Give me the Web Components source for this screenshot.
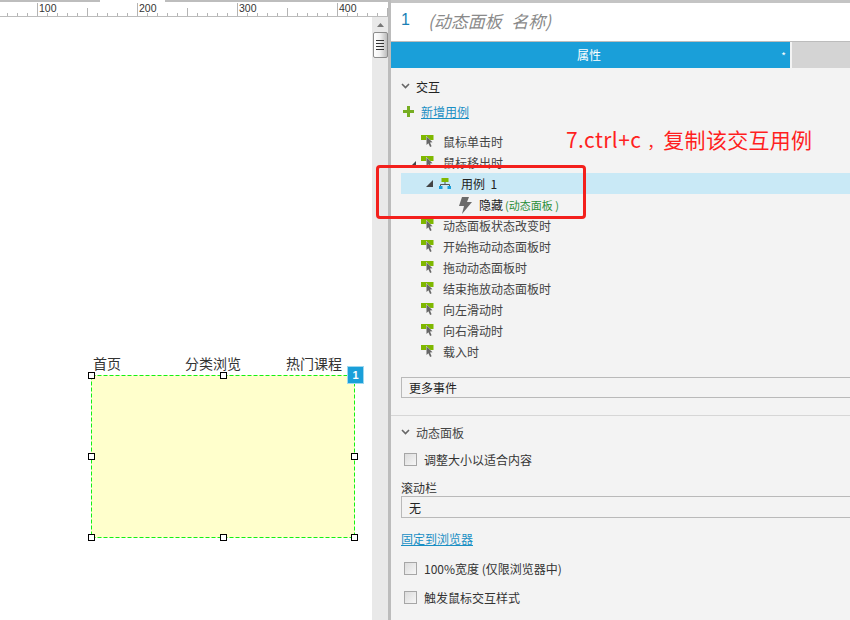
<!DOCTYPE html>
<html lang="zh">
<head>
<meta charset="utf-8">
<title>动态面板</title>
<style>
  html, body { margin: 0; height: 100%; overflow: hidden; background: #fff; }
  body { font: 12px "Noto Sans CJK SC", "Noto Sans", sans-serif; color: #333; }
</style>
</head>
<body>
<app-shell>
  <design-canvas slot="canvas">
    <canvas-label style="left:93px;top:353px">首页</canvas-label>
    <canvas-label style="left:185px;top:353px">分类浏览</canvas-label>
    <canvas-label style="left:286px;top:353px">热门课程</canvas-label>
    <panel-widget style="left:91px;top:375px" badge="1"></panel-widget>
  </design-canvas>

  <inspector-panel slot="panel">
    <section-head>交互</section-head>
    <add-case>新增用例</add-case>
    <div class="events" style="margin-top:10px">
      <event-row>鼠标单击时</event-row>
      <event-row open>鼠标移出时</event-row>
      <case-row>用例&nbsp; 1</case-row>
      <action-row target="(动态面板 )">隐藏</action-row>
      <event-row>动态面板状态改变时</event-row>
      <event-row>开始拖动动态面板时</event-row>
      <event-row>拖动动态面板时</event-row>
      <event-row>结束拖放动态面板时</event-row>
      <event-row>向左滑动时</event-row>
      <event-row>向右滑动时</event-row>
      <event-row>载入时</event-row>
    </div>
    <select-box style="margin-top:15px">更多事件</select-box>
    <hr-line></hr-line>
    <section-head style="margin-top:6px" muted>动态面板</section-head>
    <check-row style="margin-top:7px">调整大小以适合内容</check-row>
    <field-label>滚动栏</field-label>
    <select-box style="height:22px;line-height:21px">无</select-box>
    <link-text>固定到浏览器</link-text>
    <check-row style="margin-top:9px">100%宽度 (仅限浏览器中)</check-row>
    <check-row style="margin-top:8px">触发鼠标交互样式</check-row>
  </inspector-panel>

  <red-note slot="overlay"></red-note>
</app-shell>

<script>
// small helper, every element gets its own open shadow root
function define(name, html, extra = {}) {
  const template = document.createElement('template')
  template.innerHTML = html
  customElements.define(name, class extends HTMLElement {
    constructor() {
      super()
      this.attachShadow({ mode: 'open' }).append(template.content.cloneNode(true))
      if (extra.init) extra.init(this)
    }
  })
}

define('app-shell', `
  <style>
    :host { display: grid; grid-template-columns: 388px 462px; width: 850px; height: 620px; position: relative; overflow: hidden; }
    .left { display: grid; grid-template-rows: 17px 1fr; min-height: 0; }
    .work { display: grid; grid-template-columns: 372px 16px; min-height: 0; }
  </style>
  <div class="left">
    <ruler-bar></ruler-bar>
    <div class="work"><slot name="canvas"></slot><scroll-bar></scroll-bar></div>
  </div>
  <slot name="panel"></slot>
  <slot name="overlay"></slot>
`)

define('ruler-bar', `
  <style>
    :host { display: block; height: 17px; box-sizing: border-box; border-bottom: 1px solid #bcbcbc; position: relative; overflow: hidden; background: #fff; }
    .tabs { display: grid; grid-template-columns: 100px 65px 1fr; height: 2px; }
    .tabs i:nth-child(1), .tabs i:nth-child(3) { background: #bdbdbd; }
    .ticks {
      position: absolute; left: 7px; right: 0; bottom: 0; height: 3px;
      background: repeating-linear-gradient(90deg, #b4b4b4 0 1px, transparent 1px 10px);
    }
    .mid {
      position: absolute; left: 37px; right: 0; bottom: 0; height: 8px;
      background: repeating-linear-gradient(90deg, #b4b4b4 0 1px, transparent 1px 50px);
    }
    .labels { position: absolute; left: 37px; top: 3px; display: flex; }
    .labels span {
      width: 100px; box-sizing: border-box; padding-left: 1px; border-left: 1px solid #b4b4b4;
      height: 13px; font: 10.500px/11px "Liberation Sans", sans-serif; color: #333;
    }
  </style>
  <div class="tabs"><i></i><i></i><i></i></div>
  <div class="ticks"></div>
  <div class="mid"></div>
  <div class="labels"><span>100</span><span>200</span><span>300</span><span>400</span></div>
`)

define('scroll-bar', `
  <style>
    :host { display: flex; flex-direction: column; align-items: center; background: #e9e9e9; width: 16px; }
    svg { margin-top: 6px; display: block; }
    .thumb {
      margin-top: 5px; width: 15px; height: 26px; box-sizing: border-box; border: 1px solid #8c8c8c; border-radius: 2px;
      background: linear-gradient(90deg, #fff 0, #f2f2f2 45%, #bdbdbd 100%);
      display: flex; flex-direction: column; justify-content: center; gap: 2px; align-items: center;
    }
    .thumb i { display: block; width: 8px; height: 1px; background: #333; }
  </style>
  <svg width="7" height="4" viewBox="0 0 7 4"><path d="M3.5 0 7 4H0z" fill="#777"/></svg>
  <div class="thumb"><i></i><i></i><i></i><i></i></div>
`)

define('design-canvas', `
  <style>
    :host { display: block; position: relative; background: #fff; min-height: 0; }
    ::slotted(*) { position: absolute; }
  </style>
  <slot></slot>
`)

define('canvas-label', `
  <style>
    :host { display: block; font-size: 14px; line-height: 20px; color: #333; white-space: nowrap; margin-top: -17px; }
  </style>
  <slot></slot>
`)

define('panel-widget', `
  <style>
    :host { display: block; width: 264px; height: 163px; margin-top: -17px; background: #ffc; }
    svg { position: absolute; left: 0; top: 0; display: block; }
    .h { position: absolute; width: 5px; height: 5px; background: #fff; border: 1px solid #000; }
    .badge {
      position: absolute; left: 256px; top: -9px; width: 17px; height: 18px; box-sizing: border-box;
      border: 1px solid #9fd8ef; background: #1a9fd9; color: #fff;
      font: bold 11px/16px "Liberation Sans", sans-serif; text-align: center;
    }
  </style>
  <svg width="264" height="163"><rect x=".5" y=".5" width="263" height="162" fill="none" stroke="#14f014" stroke-dasharray="4 2"/></svg>
  <i class="h" style="left:-3px;top:-3px"></i>
  <i class="h" style="left:129px;top:-3px"></i>
  <i class="h" style="left:260px;top:-3px"></i>
  <i class="h" style="left:-3px;top:78px"></i>
  <i class="h" style="left:260px;top:78px"></i>
  <i class="h" style="left:-3px;top:159px"></i>
  <i class="h" style="left:129px;top:159px"></i>
  <i class="h" style="left:260px;top:159px"></i>
  <div class="badge">1</div>
`)

define('inspector-panel', `
  <style>
    :host { display: block; box-sizing: border-box; border-left: 3px solid #bcbcbc; background: #f3f3f3; overflow: hidden; }
    .top { height: 42px; box-sizing: border-box; border-top: 3px solid #c4c4c4; border-bottom: 1px solid #bcbcbc; background: #fff; padding: 0 0 4px 10px; display: flex; align-items: center; gap: 18px; font-size: 17px; }
    .top b { font: 16px "Liberation Sans", sans-serif; color: #1a7fb5; }
    .top em { color: #8a8a8a; white-space: pre; word-spacing: 1px; }
    .tabs { display: grid; grid-template-columns: 399px 1fr; gap: 2px; height: 26px; }
    .tabs div:first-child { background: #1a9fd9; color: #fff; text-align: center; line-height: 26px; position: relative; padding-right: 3px; }
    .tabs div:first-child span { position: absolute; right: 4px; top: 1px; font-size: 10px; }
    .tabs div:last-child { background: #d4d4d4; }
    .body { padding: 8px 0 0 10px; }
  </style>
  <div class="top"><b>1</b><em>(动态面板  名称)</em></div>
  <div class="tabs"><div>属性<span>*</span></div><div></div></div>
  <div class="body"><slot></slot></div>
`)

define('section-head', `
  <style>
    :host { display: flex; align-items: center; height: 20px; gap: 6px; font-size: 12px; color: #222; }
    :host([muted]) { color: #444; }
    svg { display: block; }
  </style>
  <svg width="9" height="6" viewBox="0 0 9 6"><path d="M1 1l3.5 3.5L8 1" fill="none" stroke="#666" stroke-width="1.6"/></svg>
  <slot></slot>
`)

define('add-case', `
  <style>
    :host { display: flex; align-items: center; height: 20px; margin-top: 5px; color: #1a8fc4; text-decoration: underline; gap: 7px; padding-left: 2px; }
    svg { display: block; }
  </style>
  <svg width="11" height="11" viewBox="0 0 11 11"><path d="M4 0h3v4h4v3H7v4H4V7H0V4h4z" fill="#76ad21"/></svg>
  <slot></slot>
`)

const cursorIcon = `
  <svg width="14" height="14" viewBox="0 0 14 14">
    <rect x="0" y="0" width="12.500" height="5" fill="#7fb800"/>
    <path d="M5.500 1.500l6 5.800-2.500.3 1.600 3.600-1.500.7-1.700-3.600-1.900 1.700z" fill="#666" stroke="#f3f3f3" stroke-width=".8" paint-order="stroke"/>
  </svg>`

define('event-row', `
  <style>
    :host { display: flex; align-items: center; height: 21px; padding-left: 20px; position: relative; color: #444; white-space: nowrap; }
    svg.ev { display: block; margin-right: 8px; }
    .arrow { position: absolute; left: 8px; top: 9px; display: none; }
    :host([open]) .arrow { display: block; }
  </style>
  <svg class="arrow" width="7" height="7" viewBox="0 0 7 7"><path d="M7 0v7H0z" fill="#444"/></svg>
  ${cursorIcon.replace('<svg', '<svg class="ev"')}
  <slot></slot>
`)

define('case-row', `
  <style>
    :host { display: flex; align-items: center; height: 21px; background: #c9e9f6; padding-left: 25px; color: #222; white-space: nowrap; }
    svg { display: block; }
    .org { margin: -1px 10px 0 6px; }
  </style>
  <svg width="7" height="7" viewBox="0 0 7 7"><path d="M7 0v7H0z" fill="#444"/></svg>
  <svg class="org" width="12" height="11" viewBox="0 0 12 11">
    <rect x="2.500" y="0" width="7" height="4" fill="#7fb800"/>
    <path d="M6 4v2.500M1.500 8V6.500h9V8" fill="none" stroke="#555"/>
    <rect x="0" y="8" width="3.500" height="3" fill="#1a9fd9"/>
    <rect x="8.500" y="8" width="3.500" height="3" fill="#1a9fd9"/>
  </svg>
  <slot></slot>
`)

define('action-row', `
  <style>
    :host { display: flex; align-items: center; height: 21px; padding-left: 58px; color: #222; white-space: pre; }
    svg { display: block; margin-right: 7px; margin-top: 1px; }
    span { color: #2a8f3a; margin-left: 2px; font-size: 11px; }
  </style>
  <svg width="13" height="17" viewBox="0 0 13 17"><path d="M3 0h7L8 5h5L3 17l2-8H0z" fill="#6a6a6a"/></svg>
  <slot></slot><span></span>
`, {
  init: el => { el.shadowRoot.querySelector('span').textContent = el.getAttribute('target') }
})

define('select-box', `
  <style>
    :host { display: block; height: 21px; box-sizing: border-box; margin-right: -20px; border: 1px solid #b9b9b9; background: #f3f3f3; padding-left: 7px; line-height: 19px; color: #222; }
  </style>
  <slot></slot>
`)

define('hr-line', `
  <style>
    :host { display: block; height: 1px; background: #d6d6d6; margin: 17px 0 0 -10px; }
  </style>
`)

define('check-row', `
  <style>
    :host { display: flex; align-items: center; gap: 7px; height: 21px; padding-left: 3px; color: #333; white-space: nowrap; }
    i { display: block; width: 13px; height: 13px; box-sizing: border-box; border: 1px solid #a6a6a6; background: linear-gradient(135deg, #dcdcdc, #f6f6f6); }
  </style>
  <i></i><slot></slot>
`)

define('field-label', `
  <style>
    :host { display: block; height: 17px; line-height: 17px; margin-top: 9px; color: #333; }
  </style>
  <slot></slot>
`)

define('link-text', `
  <style>
    :host { display: block; margin-top: 11px; height: 20px; line-height: 20px; color: #1a8fc4; text-decoration: underline; }
  </style>
  <slot></slot>
`)

define('red-note', `
  <style>
    :host { position: absolute; inset: 0; pointer-events: none; display: block; }
    .box { position: absolute; left: 376px; top: 165px; width: 210px; height: 54px; box-sizing: border-box; border: 3px solid #f3201c; border-radius: 4px; }
    .txt { position: absolute; left: 566px; top: 125px; font-size: 21px; line-height: 28px; color: #ff1f1f; white-space: nowrap; }
    .lat { letter-spacing: .4px; }
    .comma { font-size: 16px; margin-left: 6px; }
    .cjk { letter-spacing: .3px; }
  </style>
  <div class="box"></div>
  <div class="txt"><span class="lat">7.ctrl+c</span><span class="comma">，</span><span class="cjk">复制该交互用例</span></div>
`)
</script>
</body>
</html>
